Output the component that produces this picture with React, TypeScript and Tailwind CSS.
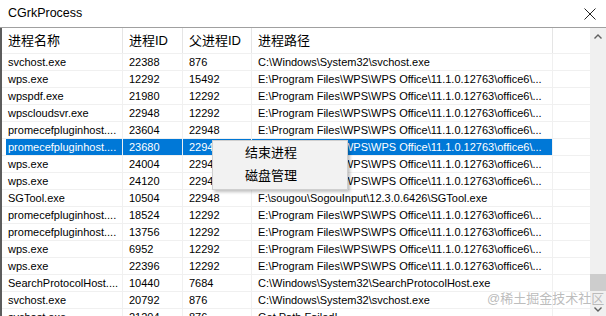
import React from "react";

const PATH_WPS = "E:\\Program Files\\WPS\\WPS Office\\11.1.0.12763\\office6\\...";

const rows = [
  ["svchost.exe", "22388", "876", "C:\\Windows\\System32\\svchost.exe"],
  ["wps.exe", "12292", "15492", PATH_WPS],
  ["wpspdf.exe", "21980", "12292", PATH_WPS],
  ["wpscloudsvr.exe", "22948", "12292", PATH_WPS],
  ["promecefpluginhost....", "23604", "22948", PATH_WPS],
  ["promecefpluginhost....", "23680", "22948", PATH_WPS],
  ["wps.exe", "24004", "22948", PATH_WPS],
  ["wps.exe", "24120", "22948", PATH_WPS],
  ["SGTool.exe", "10504", "22948", "F:\\sougou\\SogouInput\\12.3.0.6426\\SGTool.exe"],
  ["promecefpluginhost....", "18524", "12292", PATH_WPS],
  ["promecefpluginhost....", "13756", "12292", PATH_WPS],
  ["wps.exe", "6952", "12292", PATH_WPS],
  ["wps.exe", "22396", "12292", PATH_WPS],
  ["SearchProtocolHost....", "10440", "7684", "C:\\Windows\\System32\\SearchProtocolHost.exe"],
  ["svchost.exe", "20792", "876", "C:\\Windows\\System32\\svchost.exe"],
  ["svchost.exe", "21204", "876", "Get Path Failed!"],
];

const SELECTED = 5;

const font = { fontFamily: '"Liberation Sans", "Noto Sans CJK SC", sans-serif' };

const App = () => {
  return (
    <div
      className="relative w-[606px] h-[316px] overflow-hidden bg-white text-black"
      style={font}
    >
      {/* title bar */}
      <div className="flex items-center justify-between h-[28px] border-b border-[#a0a0a0] pl-[8px] pr-[10px]">
        <span className="text-[12.5px] leading-none">CGrkProcess</span>
        <svg width="12" height="12" viewBox="0 0 12 12">
          <path d="M0.5 0.5 L11.5 11.5 M11.5 0.5 L0.5 11.5" stroke="#222" strokeWidth="1" />
        </svg>
      </div>

      <div className="flex h-[288px] border-l-2 border-[#5c5c5c]">
        {/* list */}
        <div className="flex-1 flex flex-col overflow-hidden">
          <div className="flex h-[26px] shrink-0 items-center text-[13px] border-b border-[#f0f0f0]">
            <div className="w-[121px] h-full flex items-center pl-[6px] border-r border-[#e5e5e5]">进程名称</div>
            <div className="w-[60px] h-full flex items-center pl-[6px] border-r border-[#e5e5e5]">进程ID</div>
            <div className="w-[69px] h-full flex items-center pl-[6px] border-r border-[#e5e5e5]">父进程ID</div>
            <div className="w-[301px] h-full flex items-center pl-[6px] border-r border-[#e5e5e5]">进程路径</div>
            <div className="flex-1 h-full" />
          </div>

          {rows.map((r, i) => {
            const sel = i === SELECTED;
            const cell = sel ? "bg-[#0078d7] text-white" : "";
            return (
              <div key={i} className="flex h-[17px] shrink-0 text-[11px] border-b border-[#f0f0f0]">
                <div className="w-[121px] h-full flex border-r border-[#f0f0f0]">
                  <div className="w-[4px]" />
                  <div className={`flex-1 flex items-center pl-[2px] whitespace-nowrap ${cell}`}>{r[0]}</div>
                </div>
                <div className={`w-[60px] h-full flex items-center pl-[6px] border-r border-[#f0f0f0] ${cell}`}>{r[1]}</div>
                <div className={`w-[69px] h-full flex items-center pl-[6px] border-r border-[#f0f0f0] ${cell}`}>{r[2]}</div>
                <div className={`w-[301px] h-full flex items-center pl-[6px] border-r border-[#f0f0f0] whitespace-nowrap overflow-hidden ${cell}`}>{r[3]}</div>
                <div className="flex-1 h-full" />
              </div>
            );
          })}
        </div>

        {/* scrollbar */}
        <div className="w-[16px] bg-[#f0f0f0] flex flex-col">
          <div className="h-[17px] flex items-center justify-center">
            <svg width="8" height="5" viewBox="0 0 8 5">
              <path d="M0.5 4.5 L4 1 L7.5 4.5" stroke="#606060" strokeWidth="1.4" fill="none" />
            </svg>
          </div>
          <div className="flex-1" />
          <div className="h-[17px] bg-[#cdcdcd]" />
          <div className="h-[25px] flex items-end justify-center pb-[4px]">
            <svg width="8" height="5" viewBox="0 0 8 5">
              <path d="M0.5 0.5 L4 4 L7.5 0.5" stroke="#606060" strokeWidth="1.4" fill="none" />
            </svg>
          </div>
        </div>
      </div>

      {/* context menu */}
      <div className="absolute left-[212px] top-[140px] w-[136px] h-[50px] bg-[#f2f2f2] border border-[#cfcfcf] shadow-[2px_2px_3px_rgba(0,0,0,0.25)] text-[13px]">
        <div className="h-[23px] flex items-center pl-[32px]">结束进程</div>
        <div className="h-[23px] flex items-center pl-[32px]">磁盘管理</div>
      </div>

      {/* watermark */}
      <div className="absolute left-[487px] top-[292px] text-[13px] leading-none text-[#b4b4b4]/90 whitespace-nowrap">
        @稀土掘金技术社区
      </div>
    </div>
  );
};

export default App;
